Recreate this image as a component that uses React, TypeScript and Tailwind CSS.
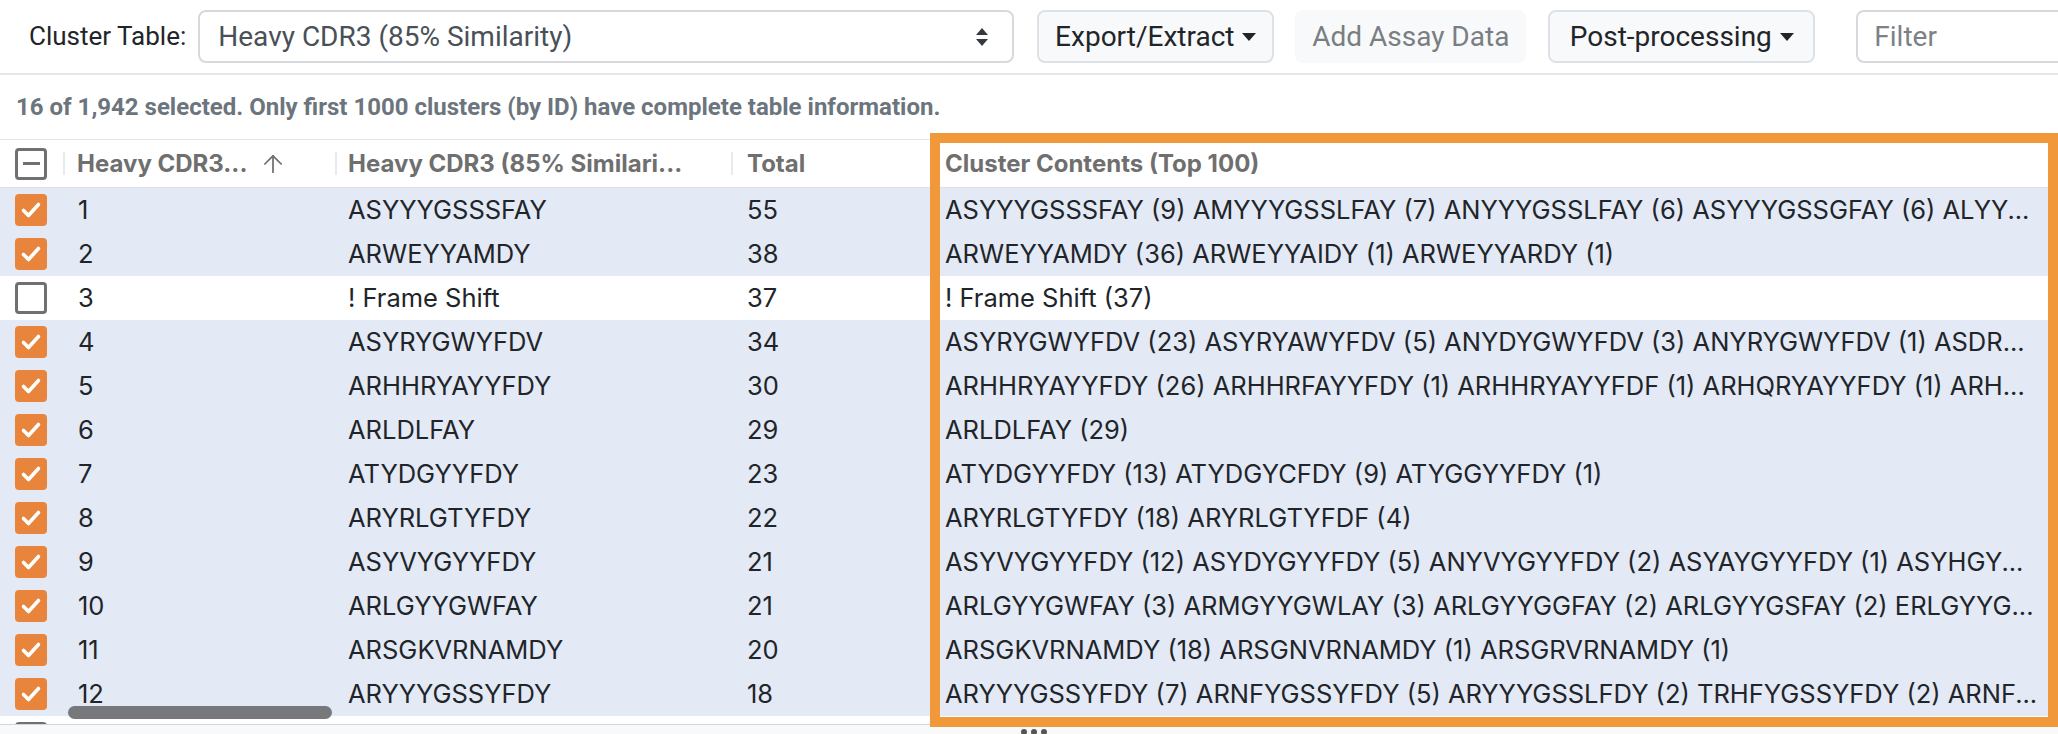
import { ArrowUp } from "lucide-react"

interface ClusterRow {
  id: number
  name: string
  total: number
  contents: string
  selected: boolean
}

const rows: ClusterRow[] = [
  { id: 1, name: "ASYYYGSSSFAY", total: 55, contents: "ASYYYGSSSFAY (9) AMYYYGSSLFAY (7) ANYYYGSSLFAY (6) ASYYYGSSGFAY (6) ALYY...", selected: true },
  { id: 2, name: "ARWEYYAMDY", total: 38, contents: "ARWEYYAMDY (36) ARWEYYAIDY (1) ARWEYYARDY (1)", selected: true },
  { id: 3, name: "! Frame Shift", total: 37, contents: "! Frame Shift (37)", selected: false },
  { id: 4, name: "ASYRYGWYFDV", total: 34, contents: "ASYRYGWYFDV (23) ASYRYAWYFDV (5) ANYDYGWYFDV (3) ANYRYGWYFDV (1) ASDR...", selected: true },
  { id: 5, name: "ARHHRYAYYFDY", total: 30, contents: "ARHHRYAYYFDY (26) ARHHRFAYYFDY (1) ARHHRYAYYFDF (1) ARHQRYAYYFDY (1) ARH...", selected: true },
  { id: 6, name: "ARLDLFAY", total: 29, contents: "ARLDLFAY (29)", selected: true },
  { id: 7, name: "ATYDGYYFDY", total: 23, contents: "ATYDGYYFDY (13) ATYDGYCFDY (9) ATYGGYYFDY (1)", selected: true },
  { id: 8, name: "ARYRLGTYFDY", total: 22, contents: "ARYRLGTYFDY (18) ARYRLGTYFDF (4)", selected: true },
  { id: 9, name: "ASYVYGYYFDY", total: 21, contents: "ASYVYGYYFDY (12) ASYDYGYYFDY (5) ANYVYGYYFDY (2) ASYAYGYYFDY (1) ASYHGY...", selected: true },
  { id: 10, name: "ARLGYYGWFAY", total: 21, contents: "ARLGYYGWFAY (3) ARMGYYGWLAY (3) ARLGYYGGFAY (2) ARLGYYGSFAY (2) ERLGYYG...", selected: true },
  { id: 11, name: "ARSGKVRNAMDY", total: 20, contents: "ARSGKVRNAMDY (18) ARSGNVRNAMDY (1) ARSGRVRNAMDY (1)", selected: true },
  { id: 12, name: "ARYYYGSSYFDY", total: 18, contents: "ARYYYGSSYFDY (7) ARNFYGSSYFDY (5) ARYYYGSSLFDY (2) TRHFYGSSYFDY (2) ARNF...", selected: true },
]

function Caret() {
  return (
    <svg width="14" height="8" viewBox="0 0 14 8" className="ml-[8px] shrink-0">
      <polygon points="0,0 14,0 7,8" fill="#212529" />
    </svg>
  )
}

function Checkbox({ checked }: { checked: boolean }) {
  if (checked) {
    return (
      <div className="w-[32px] h-[32px] rounded-[4px] bg-[#e8843c] flex items-center justify-center">
        <svg width="32" height="32" viewBox="0 0 32 32">
          <path d="M8.5 16.5 L13.5 21.5 L23.5 10.5" fill="none" stroke="white" strokeWidth="3.6" strokeLinecap="round" strokeLinejoin="round" />
        </svg>
      </div>
    )
  }
  return <div className="w-[32px] h-[32px] rounded-[4px] border-[3px] border-[#707070] bg-white" />
}

function HeaderSep() {
  return <div className="w-[2px] h-[23px] bg-[#e8eaed] shrink-0" />
}

export default function App() {
  return (
    <div className="w-[2058px] h-[734px] overflow-hidden relative bg-white">
      {/* Toolbar */}
      <div className="h-[75px] flex items-center border-b-2 border-[#e4e6e9] font-['Roboto',sans-serif] text-[28px] whitespace-nowrap">
        <span className="ml-[29px] shrink-0 text-[26px] text-[#212529]">Cluster Table:</span>
        <div className="ml-[12px] w-[816px] h-[53px] shrink-0 border-2 border-[#d6d9dd] rounded-[8px] flex items-center pl-[18px] pr-[24px] text-[#495057]">
          <span className="flex-1">Heavy CDR3 (85% Similarity)</span>
          <svg width="12" height="20" viewBox="0 0 12 20">
            <polygon points="0,8 6,1 12,8" fill="#343a40" />
            <polygon points="0,12 6,19 12,12" fill="#343a40" />
          </svg>
        </div>
        <button className="ml-[23px] w-[237px] h-[53px] shrink-0 bg-[#f8f9fa] border-2 border-[#dee2e6] rounded-[8px] flex items-center justify-center text-[#212529]">
          Export/Extract
          <Caret />
        </button>
        <button className="ml-[21px] w-[231px] h-[53px] shrink-0 bg-[#f8f9fa] rounded-[8px] flex items-center justify-center text-[#7a7e83]">
          Add Assay Data
        </button>
        <button className="ml-[22px] w-[267px] h-[53px] shrink-0 bg-[#f8f9fa] border-2 border-[#dee2e6] rounded-[8px] flex items-center justify-center text-[#212529]">
          Post-processing
          <Caret />
        </button>
        <div className="ml-[41px] w-[260px] h-[53px] shrink-0 border-2 border-[#d6d9dd] rounded-[8px] flex items-center pl-[16px] text-[#7b8187]">
          Filter
        </div>
      </div>

      {/* Selection info */}
      <div className="h-[64px] flex items-center pl-[16px] font-['Roboto',sans-serif] text-[24px] font-bold text-[#6c757d] whitespace-nowrap">
        16 of 1,942 selected. Only first 1000 clusters (by ID) have complete table information.
      </div>

      {/* Table */}
      <div className="border-t border-[#e1e4e8] font-['Inter',sans-serif]">
        <div className="h-[48px] flex items-center border-b border-[#dde2ea] text-[24px] font-bold text-[#6f6f6f]">
          <div className="w-[63px] shrink-0 flex justify-center pr-[1px]">
            <div className="w-[32px] h-[32px] rounded-[4px] border-[3px] border-[#707070] flex items-center justify-center">
              <div className="w-[17px] h-[3px] bg-[#707070]" />
            </div>
          </div>
          <div className="w-[272px] shrink-0 flex items-center">
            <HeaderSep />
            <span className="ml-[12px] whitespace-nowrap">Heavy CDR3...</span>
            <ArrowUp size={28} strokeWidth={1.5} className="ml-[12px] text-[#6f6f6f]" />
          </div>
          <div className="w-[396px] shrink-0 flex items-center">
            <HeaderSep />
            <span className="ml-[11px] whitespace-nowrap">Heavy CDR3 (85% Similari...</span>
          </div>
          <div className="w-[199px] shrink-0 flex items-center">
            <HeaderSep />
            <span className="ml-[14px]">Total</span>
          </div>
          <div className="flex-1 pl-[15px] whitespace-nowrap">Cluster Contents (Top 100)</div>
        </div>

        <div className="h-[536px] overflow-hidden text-[25.5px] text-[#212529]">
          {rows.map((row) => (
            <div
              key={row.id}
              className={`h-[44px] flex items-center ${row.selected ? "bg-[#e3e9f5]" : "bg-white"}`}
            >
              <div className="w-[63px] shrink-0 flex justify-center pr-[1px]">
                <Checkbox checked={row.selected} />
              </div>
              <div className="w-[272px] shrink-0 pl-[15px]">{row.id}</div>
              <div className="w-[396px] shrink-0 pl-[13px] whitespace-nowrap">{row.name}</div>
              <div className="w-[199px] shrink-0 pl-[16px]">{row.total}</div>
              <div className="flex-1 pl-[15px] whitespace-nowrap overflow-hidden">{row.contents}</div>
            </div>
          ))}
          {/* next row, scrolled mostly out of view */}
          <div className="h-[44px] flex items-center bg-white">
            <div className="w-[63px] shrink-0 flex justify-center pr-[1px]">
              <Checkbox checked={false} />
            </div>
          </div>
        </div>

        {/* Resize footer */}
        <div className="h-[10px] border-t border-[#d4d6d9] bg-[#f8f9fa] flex justify-center gap-[4px] pt-[4px] pl-[10px]">
          <div className="w-[6px] h-[6px] rounded-full bg-[#555]" />
          <div className="w-[6px] h-[6px] rounded-full bg-[#555]" />
          <div className="w-[6px] h-[6px] rounded-full bg-[#555]" />
        </div>
      </div>

      {/* Horizontal scrollbar overlay */}
      <div className="absolute left-[68px] top-[706px] w-[264px] h-[13px] rounded-full bg-[#76787c]" />

      {/* Highlight frame around Cluster Contents */}
      <div className="absolute left-[930px] top-[133px] w-[1128px] h-[594px] border-[10px] border-[#f0983a] pointer-events-none" />
    </div>
  )
}
